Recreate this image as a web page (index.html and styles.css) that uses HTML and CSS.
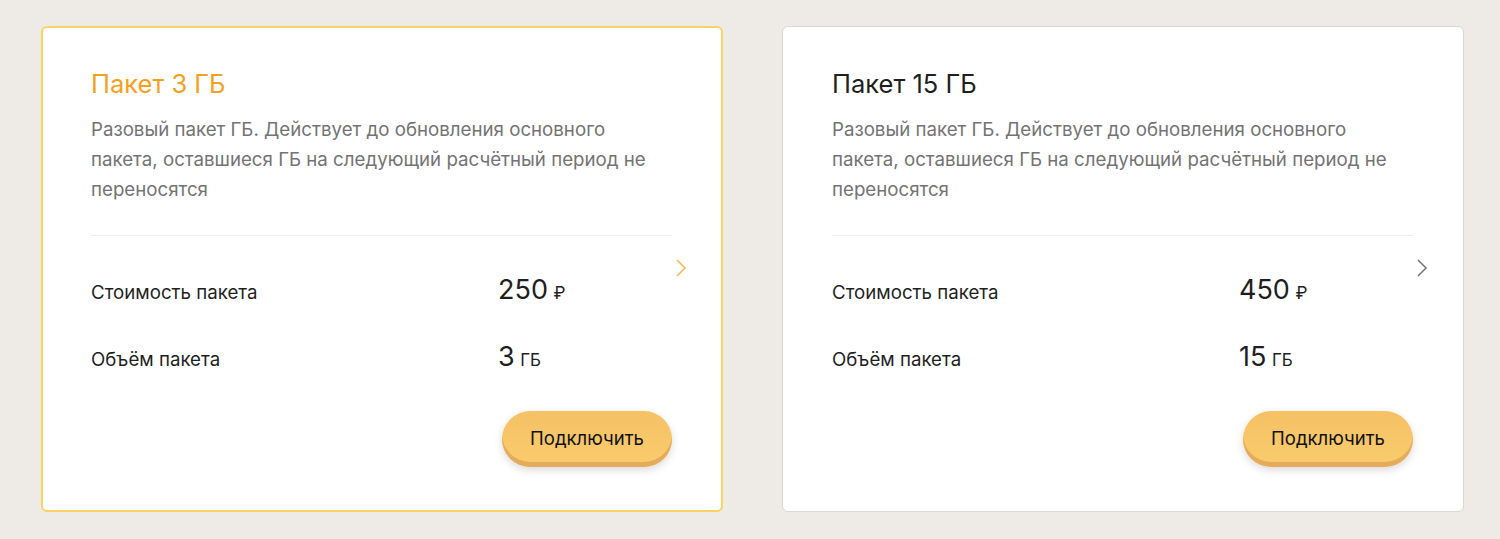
FILE: index.html
```html
<!DOCTYPE html>
<html lang="ru">
<head>
  <meta charset="UTF-8">
  <meta name="viewport" content="width=device-width, initial-scale=1.0">
  <title>Пакеты ГБ</title>
  <link rel="stylesheet" href="styles.css">
</head>
<body>
  <div class="packages">
    <div class="package package--active">
      <h3 class="package__title">Пакет 3 ГБ</h3>
      <p class="package__text">Разовый пакет ГБ. Действует до обновления основного пакета, оставшиеся ГБ на следующий расчётный период не переносятся</p>
      <div class="package__info">
        <div class="package__row">
          <span class="package__label">Стоимость пакета</span>
          <span class="package__value">250 <small>₽</small></span>
        </div>
        <div class="package__row">
          <span class="package__label">Объём пакета</span>
          <span class="package__value">3 <small>ГБ</small></span>
        </div>
        <svg class="package__arrow" width="12" height="20" viewBox="0 0 12 20"><path d="M2 2l8 8-8 8" fill="none" stroke="currentColor" stroke-width="1.5"/></svg>
      </div>
      <div class="package__footer">
        <button class="btn">Подключить</button>
      </div>
    </div>

    <div class="package">
      <h3 class="package__title">Пакет 15 ГБ</h3>
      <p class="package__text">Разовый пакет ГБ. Действует до обновления основного пакета, оставшиеся ГБ на следующий расчётный период не переносятся</p>
      <div class="package__info">
        <div class="package__row">
          <span class="package__label">Стоимость пакета</span>
          <span class="package__value">450 <small>₽</small></span>
        </div>
        <div class="package__row">
          <span class="package__label">Объём пакета</span>
          <span class="package__value">15 <small>ГБ</small></span>
        </div>
        <svg class="package__arrow" width="12" height="20" viewBox="0 0 12 20"><path d="M2 2l8 8-8 8" fill="none" stroke="currentColor" stroke-width="1.5"/></svg>
      </div>
      <div class="package__footer">
        <button class="btn">Подключить</button>
      </div>
    </div>
  </div>
</body>
</html>
```

FILE: styles.css
```css
* {
  box-sizing: border-box;
  margin: 0;
  padding: 0;
}

body {
  font-family: Inter, "Noto Sans", sans-serif;
  background-color: #eeebe6;
  color: #1f1f1f;
}

.packages {
  display: flex;
  gap: 59px;
  padding: 26px 0 0 41px;
}

.package {
  width: 682px;
  height: 486px;
  background-color: #fff;
  border: 1px solid #d9d7d3;
  border-radius: 6px;
  padding: 41px 50px 0 49px;
}

.package--active {
  border: 2px solid #fdd162;
  padding: 40px 49px 0 48px;
}

.package__title {
  font-size: 25.5px;
  font-weight: 400;
  line-height: 32px;
  margin-bottom: 15px;
}

.package--active .package__title {
  color: #f59f22;
}

.package__text {
  font-size: 18.7px;
  line-height: 30px;
  color: #737373;
  padding-bottom: 30px;
  border-bottom: 1px solid #eeeeee;
}

.package__info {
  position: relative;
  padding-top: 37px;
}

.package__row {
  display: flex;
  align-items: baseline;
  height: 67px;
}

.package__label {
  width: 407px;
  font-size: 18.7px;
}

.package__value {
  font-size: 27px;
  word-spacing: -2px;
}

.package__value small {
  font-size: 17px;
}

.package__arrow {
  position: absolute;
  top: 22px;
  right: -15px;
  color: #737373;
}

.package--active .package__arrow {
  color: #f9b44f;
}

.package__footer {
  display: flex;
  justify-content: flex-end;
  margin-top: 4px;
}

.btn {
  width: 170px;
  height: 56px;
  border: none;
  border-radius: 28px;
  font-family: inherit;
  font-size: 18.5px;
  color: #111;
  padding-bottom: 2px;
  background: linear-gradient(#f5c165, #f9cc6b);
  box-shadow: inset 0 -5px 0 #e5ab5d, 0 3px 8px rgba(0, 0, 0, 0.15);
  cursor: pointer;
}
```
